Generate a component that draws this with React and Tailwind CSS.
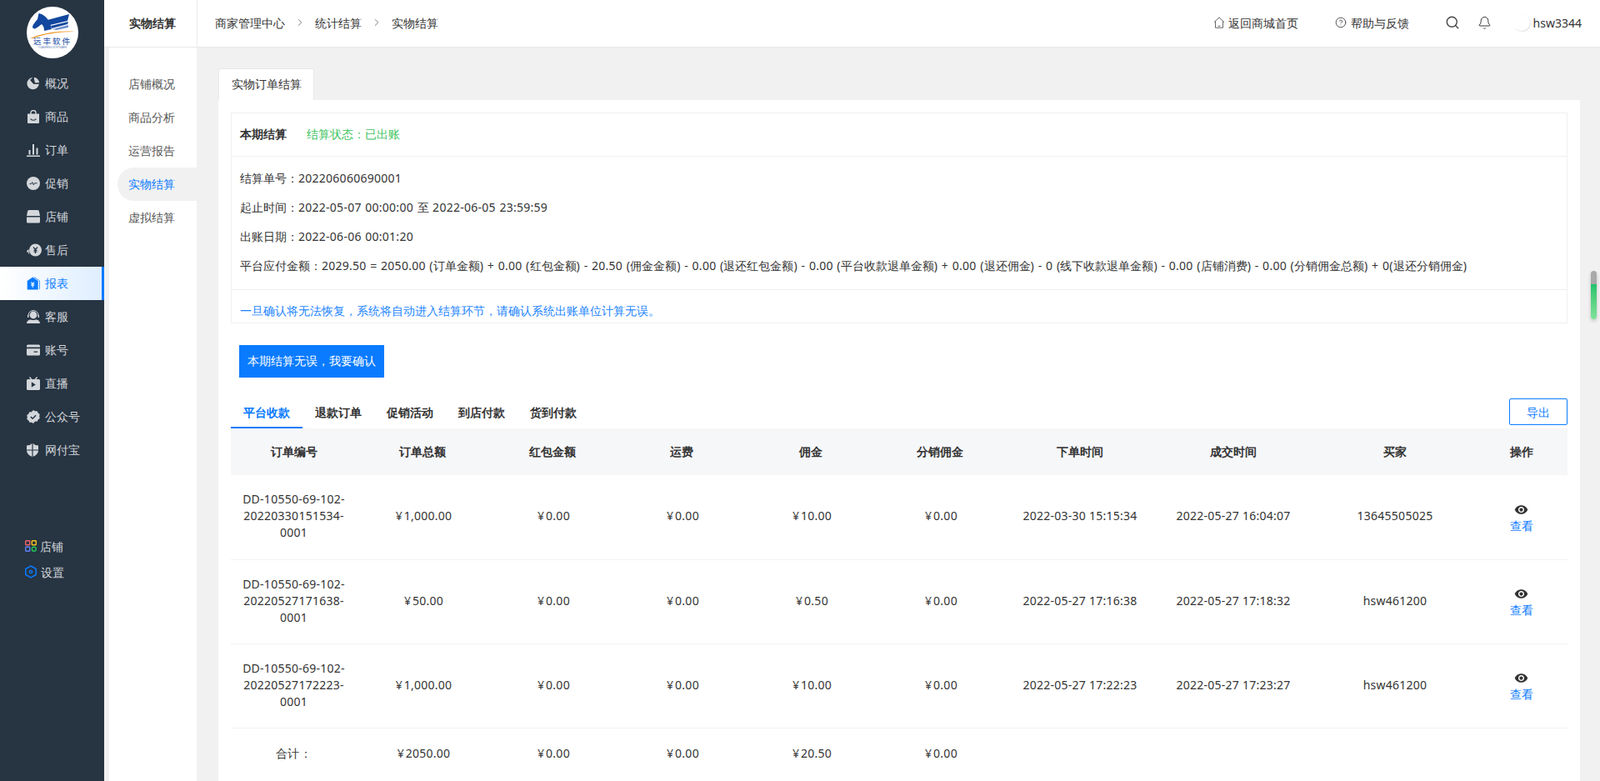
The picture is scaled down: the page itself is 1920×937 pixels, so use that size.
import React from "react";
import { Search, Bell, ChevronRight, CircleHelp } from "lucide-react";

const c = "#d3d7db";
const d = "#273442";
const icons = {
  pie: (
    <svg viewBox="0 0 16 16" className="w-[16px] h-[16px]"><path fill={c} d="M7.2 1.2A7.2 7.2 0 1 0 15 9H8.6L4.6 4.4z" transform="translate(-.2 -.2)"/><path fill={c} d="M8.4.8a7.2 7.2 0 0 1 6.9 6.9l-5.2 0z"/><path fill="none" stroke={d} d="M8 8 4.5 3.4M8 8l7.5-.3M8 8 8.2.5"/></svg>
  ),
  bag: (
    <svg viewBox="0 0 16 16" className="w-[16px] h-[16px]"><path fill={c} d="M1 4.5h14V15a1 1 0 0 1-1 1H2a1 1 0 0 1-1-1z"/><path fill="none" stroke={c} strokeWidth="1.4" d="M5 5V3a3 2.5 0 0 1 6 0v2"/><path fill="none" stroke={d} strokeWidth="1.2" d="M4.5 10.5c1.5 2.3 5.5 2.3 7 0"/></svg>
  ),
  bars: (
    <svg viewBox="0 0 16 16" className="w-[16px] h-[16px]"><path fill={c} d="M0 14.5h16V16H0zM2.5 8h2v5.5h-2zM7 1h2v12.5H7zM11.5 5.5h2v8h-2z"/></svg>
  ),
  pulse: (
    <svg viewBox="0 0 16 16" className="w-[16px] h-[16px]"><circle cx="8" cy="8" r="8" fill={c}/><path fill="none" stroke={d} strokeWidth="1" d="M3.5 8.6h2l1.2-2 1.6 3.2 1.2-2h3"/></svg>
  ),
  shop: (
    <svg viewBox="0 0 16 16" className="w-[16px] h-[16px]"><path fill={c} d="M3 0h10a2 2 0 0 1 2 2l1 5H0l1-5a2 2 0 0 1 2-2zM0 8.6h16V14a1.6 1.6 0 0 1-1.6 1.6H1.6A1.6 1.6 0 0 1 0 14z"/></svg>
  ),
  after: (
    <svg viewBox="0 0 18 16" className="w-[18px] h-[16px]"><circle cx="10.5" cy="8" r="7.5" fill={c}/><path fill="none" stroke={d} strokeWidth="1.2" d="M8 4.5l2.5 3 2.5-3M10.5 7.5V12M8.5 8.3h4M8.5 10h4"/><path fill={c} d="M0 9.5 2.2 6.8v1.5h.6v2.6c0 .9.2 1.4.8 1.9-1.4-.3-2-1.2-2-2.5H0z"/></svg>
  ),
  report: (
    <svg viewBox="0 0 16 16" className="w-[16px] h-[16px]"><path fill="#0a7bff" d="M8 .5 14.5 5v10.5h-13V5z" transform="translate(-.8 0)"/><path fill="none" stroke="#0a7bff" strokeWidth=".8" d="M9 .5 15.6 5v10"/><path fill="#fff" d="M5 6.4h1.3L7.2 8l.9-1.6h1.3L8.2 8.6h1v.9H7.7v.7h1.5v.9H7.7V13H6.7v-1.9H5.2v-.9h1.5v-.7H5.2v-.9h1z"/></svg>
  ),
  service: (
    <svg viewBox="0 0 16 16" className="w-[16px] h-[16px]"><circle cx="8" cy="6" r="4.4" fill={c}/><path fill="none" stroke={c} strokeWidth="1" d="M2 7V6a6 5.4 0 0 1 12 0v1"/><path fill={c} d="M1 6h1.4v3H1zM13.6 6H15v3h-1.4zM0 16c.2-3 3-4.4 4.6-4.4 1 .6 5.8.6 6.8 0C13 11.6 15.8 13 16 16z"/></svg>
  ),
  wallet: (
    <svg viewBox="0 0 16 16" className="w-[16px] h-[16px]"><path fill={c} d="M1.5 1.5h13A1.5 1.5 0 0 1 16 3v1.6H0V3a1.5 1.5 0 0 1 1.5-1.5zM0 6.2h16V13a1.5 1.5 0 0 1-1.5 1.5h-13A1.5 1.5 0 0 1 0 13z"/><path fill={d} d="M8.5 9.5h4.5a1 1 0 0 1 0 1.2H8.5z"/></svg>
  ),
  tv: (
    <svg viewBox="0 0 16 16" className="w-[16px] h-[16px]"><path fill={c} d="M1.5 3h13A1.5 1.5 0 0 1 16 4.5v10a1.5 1.5 0 0 1-1.5 1.5h-13A1.5 1.5 0 0 1 0 14.500v-10A1.500 1.500 0 0 1 1.500 3z"/><path fill="none" stroke={c} strokeWidth="1.3" d="M3.500.5 6 3.500M12.500.5 10 3.500"/><path fill={d} d="m5.800 6.300 5 3.200-5 3.200z"/></svg>
  ),
  badge: (
    <svg viewBox="0 0 16 16" className="w-[16px] h-[16px]"><path fill={c} d="M8 0l2.100 1.300 2.500-.1 1.100 2.200 2 1.500-.5 2.500.5 2.600-2 1.500-1.100 2.200-2.500-.1L8 16l-2.100-1.300-2.500.1-1.100-2.200-2-1.500.5-2.600L.3 6l2-1.600 1.100-2.200 2.500.1z"/><path fill="none" stroke={d} strokeWidth="1.500" d="m4.800 8 2.300 2.300 4-4"/></svg>
  ),
  shield: (
    <svg viewBox="0 0 14 16" className="w-[14px] h-[16px]"><path fill={c} d="M6.400 0v7.400H0V2.500A9 9 0 0 0 6.400 0zM7.600 0A9 9 0 0 0 14 2.500v4.900H7.600zM0 8.600h6.400V16C3 14.500.3 12.500 0 8.600zM7.600 8.600H14C13.700 12.500 11 14.500 7.600 16z"/></svg>
  ),
};

const nav = [
  ["pie", "概况"], ["bag", "商品"], ["bars", "订单"], ["pulse", "促销"], ["shop", "店铺"], ["after", "售后"],
  ["report", "报表", true], ["service", "客服"], ["wallet", "账号"], ["tv", "直播"], ["badge", "公众号"], ["shield", "网付宝"],
];

// Latin runs sit a little wider in the reference than Lato sets them.
function T({ children }) {
  return String(children)
    .split(/([\u4e00-\u9fff：，。]+)/)
    .map((part, i) =>
      i % 2 ? (
        <span key={i}>{part}</span>
      ) : (
        <span key={i} className="tracking-[.26px] [word-spacing:.7px]">{part}</span>
      )
    );
}

function Logo() {
  return (
    <svg viewBox="0 0 62 62" className="w-[62px] h-[62px]">
      <circle cx="31" cy="31" r="31" fill="#fff" />
      <path fill="#12479f" d="M7 24C8 20 11 18 13 15L14.500 8C20 9 25 13 28 20L30 27 21 29C21 25 20 23 18 21C15 23 13 25 11 26C9 27 7 26 7 24z" />
      <path fill="#12479f" d="M25 16 51 9 49 17 28 22zM29 23 50 18 49 21 30 26z" />
      <path fill="#6f92cf" d="M31 27 50 22 50 25 36 28z" />
      <path fill="#ee9a2e" d="M4 38C16 33 36 28 58 30C38 30 20 33 8 38z" />
      <text x="31" y="44.500" textAnchor="middle" fontSize="9.500" fontWeight="500" fill="#3e64ae" fontFamily="'Noto Sans CJK SC'" letterSpacing="2">远丰软件</text>
      <text x="31" y="50" textAnchor="middle" fontSize="3" fill="#5f7fb8" fontFamily="'Liberation Sans'">YUANFENG SOFTWARE</text>
    </svg>
  );
}

function Sidebar() {
  return (
    <aside className="w-[125px] shrink-0 bg-[#273442] flex flex-col">
      <div className="h-[80px] pt-[8px] flex justify-center items-start">
        <Logo />
      </div>
      {nav.map(([icon, label, active]) => (
        <div
          key={label}
          className={
            active
              ? "h-[40px] flex items-center pl-[33px] bg-gradient-to-r from-white to-[#dfeeff] border-r-[3px] border-[#0a7bff] text-[#0a7bff]"
              : "h-[40px] flex items-center pl-[33px] text-[#d3d7db]"
          }
        >
          <span className="w-[22px] flex justify-start shrink-0 -ml-[1px] pr-[4px]">{icons[icon]}</span>
          <span className="pb-[2px]">{label}</span>
        </div>
      ))}
      <div className="mt-[85px] pl-[30px] flex flex-col gap-[11px] text-[#d3d7db]">
        <div className="flex items-center gap-[4px] h-[20px]">
          <svg viewBox="0 0 14 14" className="w-[14px] h-[14px]">
            <rect x=".7" y=".7" width="5" height="5" rx=".6" fill="none" stroke="#f0636c" strokeWidth="1.400" />
            <rect x="8.300" y=".7" width="5" height="5" rx=".6" fill="none" stroke="#f5c11c" strokeWidth="1.400" />
            <rect x=".7" y="8.300" width="5" height="5" rx=".6" fill="none" stroke="#5b7ff0" strokeWidth="1.400" />
            <circle cx="10.800" cy="10.800" r="2.500" fill="none" stroke="#22c35a" strokeWidth="1.400" />
          </svg>
          <span>店铺</span>
        </div>
        <div className="flex items-center gap-[5px] h-[20px]">
          <svg viewBox="0 0 14 16" className="w-[14px] h-[16px]">
            <path d="M7 1 13.200 4.500v7L7 15 .8 11.500v-7z" fill="none" stroke="#0a7bff" strokeWidth="1.500" />
            <circle cx="7" cy="8" r="1.700" fill="none" stroke="#0a7bff" strokeWidth="1.300" />
          </svg>
          <span>设置</span>
        </div>
      </div>
    </aside>
  );
}

function Header() {
  return (
    <header className="h-[57px] shrink-0 bg-white border-b border-[#e8e8e8] flex items-center text-[#333]">
      <div className="w-[112px] h-full pl-[5px] pb-[2px] border-r border-[#ececec] flex items-center justify-center font-bold">实物结算</div>
      <nav className="flex items-center pl-[21px] pb-[2px] h-full">
        <span>商家管理中心</span>
        <ChevronRight className="w-[14px] h-[14px] mx-[11px] text-[#666]" strokeWidth={1.400} />
        <span>统计结算</span>
        <ChevronRight className="w-[14px] h-[14px] mx-[11px] text-[#666]" strokeWidth={1.400} />
        <span>实物结算</span>
      </nav>
      <div className="ml-auto flex items-center pr-[22px] pb-[2px] h-full">
        <svg viewBox="0 0 14 14" className="w-[14px] h-[14px] text-[#666]" fill="none" stroke="currentColor" strokeWidth="1">
          <path d="M1 6.500 7 1l6 5.500M2.500 5.500v7.800h9V5.500M5.500 11.300h3" />
        </svg>
        <span className="ml-[4px]">返回商城首页</span>
        <CircleHelp className="w-[14px] h-[14px] ml-[44px] text-[#444]" strokeWidth={1.500} />
        <span className="ml-[5px]">帮助与反馈</span>
        <Search className="w-[18px] h-[18px] ml-[43px] text-[#444]" strokeWidth={1.800} />
        <Bell className="w-[17px] h-[17px] ml-[21px] text-[#333]" strokeWidth={1.400} />
        <span className="w-[20px] h-[20px] rounded-full bg-white shadow-[1px_1px_2px_rgba(0,0,0,0.12)] ml-[26px]" />
        <span className="ml-[4px]">hsw3344</span>
      </div>
    </header>
  );
}

function SubMenu() {
  const items = ["店铺概况", "商品分析", "运营报告", "实物结算", "虚拟结算"];
  return (
    <div className="w-[105px] ml-[6px] shrink-0 bg-white pt-[24px] text-[#555]">
      {items.map((t) =>
        t === "实物结算" ? (
          <div key={t} className="h-[40px] ml-[10px] pl-[13px] pb-[2px] flex items-center rounded-l-full bg-[#f1f1f1] text-[#0a7bff]">{t}</div>
        ) : (
          <div key={t} className="h-[40px] pl-[23px] pb-[2px] flex items-center">{t}</div>
        )
      )}
    </div>
  );
}

function Eye() {
  return (
    <svg viewBox="0 0 24 24" className="w-[17px] h-[17px] fill-[#333]">
      <path d="M12 4.500C7 4.500 2.730 7.610 1 12c1.730 4.390 6 7.500 11 7.500s9.270-3.110 11-7.500c-1.730-4.390-6-7.500-11-7.500zM12 17c-2.760 0-5-2.240-5-5s2.240-5 5-5 5 2.240 5 5-2.240 5-5 5zm0-8c-1.660 0-3 1.340-3 3s1.340 3 3 3 3-1.340 3-3-1.340-3-3-3z" />
    </svg>
  );
}

function Cell({ v }) {
  if (v.startsWith("¥")) {
    return (
      <>
        <span className="mr-[2px]">¥</span>
        <span className="tracking-[.26px]">{v.slice(1)}</span>
      </>
    );
  }
  return <span className="tracking-[.26px]">{v}</span>;
}

const rows = [
  ["DD-10550-69-102-20220330151534-0001", "¥1,000.00", "¥0.00", "¥0.00", "¥10.00", "¥0.00", "2022-03-30 15:15:34", "2022-05-27 16:04:07", "13645505025"],
  ["DD-10550-69-102-20220527171638-0001", "¥50.00", "¥0.00", "¥0.00", "¥0.50", "¥0.00", "2022-05-27 17:16:38", "2022-05-27 17:18:32", "hsw461200"],
  ["DD-10550-69-102-20220527172223-0001", "¥1,000.00", "¥0.00", "¥0.00", "¥10.00", "¥0.00", "2022-05-27 17:22:23", "2022-05-27 17:23:27", "hsw461200"],
];
const heads = ["订单编号", "订单总额", "红包金额", "运费", "佣金", "分销佣金", "下单时间", "成交时间", "买家", "操作"];
const widths = ["w-[151px]", "w-[157px]", "w-[155px]", "w-[155px]", "w-[155px]", "w-[155px]", "w-[182px]", "w-[186px]", "w-[202px]", "w-[106px] pr-[5px]"];

function cellPad(j) {
  if (j === 0) return "px-[10px] tracking-[.14px]";
  if (j >= 1 && j <= 5) return "pl-[13px] pr-[9px]";
  return "px-[10px]";
}

function Table() {
  return (
    <table className="w-full table-fixed border-collapse text-center">
      <thead>
        <tr className="h-[56px] bg-[#f6f7f9]">
          {heads.map((h, i) => (
            <th key={h} className={`${widths[i]} pb-[2px] font-bold text-[#333]`}>{h}</th>
          ))}
        </tr>
      </thead>
      <tbody>
        {rows.map((r, i) => (
          <tr key={i} className="h-[101px] border-b border-[#f2f2f2]">
            {r.map((v, j) => (
              <td key={j} className={`${cellPad(j)} pb-[2px] leading-[20px]`}><Cell v={v} /></td>
            ))}
            <td className="leading-[20px] pt-[3px] pr-[5px]">
              <div className="flex flex-col items-center text-[#0a7bff]">
                <Eye />
                <span className="mt-[1px]">查看</span>
              </div>
            </td>
          </tr>
        ))}
        <tr className="h-[65px]">
          {["合计：", "¥2050.00", "¥0.00", "¥0.00", "¥20.50", "¥0.00", "", "", "", ""].map((v, j) => (
            <td key={j} className={`${cellPad(j)} align-top pt-[19px]`}>{v ? <Cell v={v} /> : null}</td>
          ))}
        </tr>
      </tbody>
    </table>
  );
}

function Main() {
  const tabs = ["平台收款", "退款订单", "促销活动", "到店付款", "货到付款"];
  return (
    <main className="flex-1 min-w-0 pl-[26px] pr-[24px] pt-[25px]">
      <div className="w-[115px] h-[38px] pb-[2px] bg-white border border-[#e9e9e9] border-b-0 rounded-t-[3px] flex items-center justify-center text-[#333]">实物订单结算</div>
      <div className="bg-white p-[15px] text-[#333]">
        <section className="h-[253px] border border-[#f0f0f0]">
          <div className="h-[52px] px-[10px] pb-[2px] border-b border-[#f0f0f0] flex items-center">
            <b className="font-bold">本期结算</b>
            <span className="ml-[24px] text-[#3cc460]">结算状态：已出账</span>
          </div>
          <div className="h-[160px] px-[10px] pt-[8px] border-b border-[#f0f0f0] leading-[35px]">
            <p><T>结算单号：202206060690001</T></p>
            <p><T>起止时间：2022-05-07 00:00:00 至 2022-06-05 23:59:59</T></p>
            <p><T>出账日期：2022-06-06 00:01:20</T></p>
            <p><T>平台应付金额：2029.50 = 2050.00 (订单金额) + 0.00 (红包金额) - 20.50 (佣金金额) - 0.00 (退还红包金额) - 0.00 (平台收款退单金额) + 0.00 (退还佣金) - 0 (线下收款退单金额) - 0.00 (店铺消费) - 0.00 (分销佣金总额) + 0(退还分销佣金)</T></p>
          </div>
          <div className="h-[39px] px-[10px] pt-[10px] flex items-center text-[#1a84ff]">一旦确认将无法恢复，系统将自动进入结算环节，请确认系统出账单位计算无误。</div>
        </section>
        <button className="mt-[26px] ml-[10px] pb-[2px] block w-[174px] h-[39px] bg-[#0a7bff] text-white">本期结算无误，我要确认</button>
        <div className="mt-[24px] h-[37px] flex justify-between items-start">
          <div className="flex h-full">
            {tabs.map((t, i) => (
              <div
                key={t}
                className={
                  i === 0
                    ? "w-[86px] flex items-center justify-center border-b-2 border-[#0a7bff] text-[#0a7bff] font-bold"
                    : "w-[86px] flex items-center justify-center border-b-2 border-transparent font-bold"
                }
              >
                {t}
              </div>
            ))}
          </div>
          <button className="w-[70px] h-[32px] mt-[1px] border border-[#0a7bff] rounded-[2px] text-[#0a7bff]">导出</button>
        </div>
        <Table />
      </div>
    </main>
  );
}

export default function App() {
  return (
    <div className="relative w-[1920px] h-[937px] overflow-hidden flex bg-[#f1f1f1] text-[14px] font-['Lato','Noto_Sans_CJK_SC',sans-serif]">
      <Sidebar />
      <div className="flex-1 min-w-0 flex flex-col">
        <Header />
        <div className="flex-1 min-h-0 flex overflow-hidden">
          <SubMenu />
          <Main />
        </div>
      </div>
      <div className="absolute left-[1909px] top-[325px] w-[7px] h-[58px] rounded-full overflow-hidden shadow-[0_2px_4px_rgba(0,0,0,0.2)]">
        <div className="h-[16px] bg-[#a9a9a9]" />
        <div className="h-[42px] bg-gradient-to-b from-[#1fc26a] to-[#7fe39a]" />
      </div>
    </div>
  );
}
